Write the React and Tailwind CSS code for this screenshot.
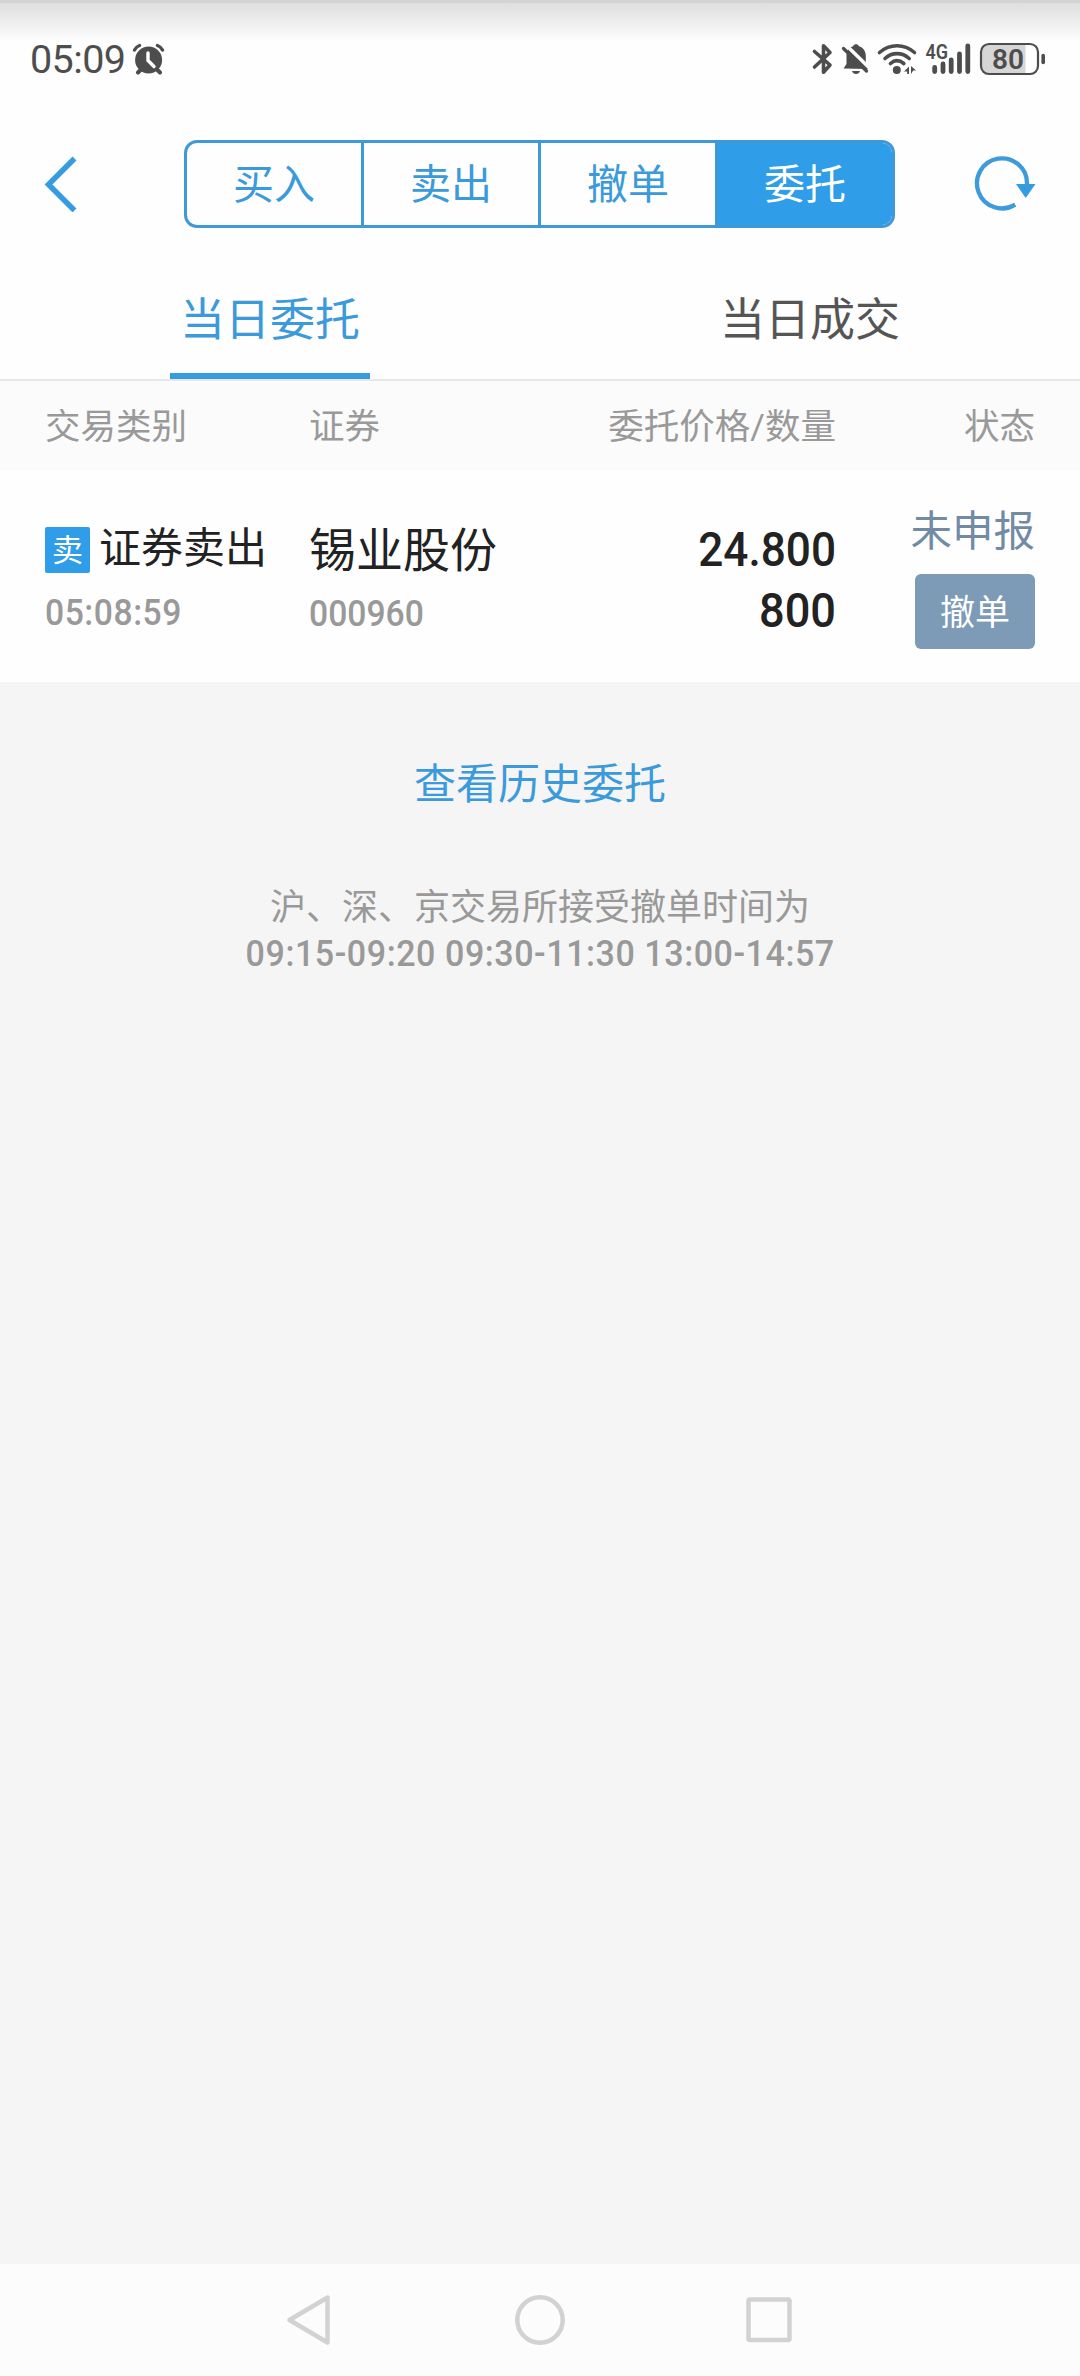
import { useState } from 'react';

const ACTIONS = ['买入', '卖出', '撤单', '委托'];
const TABS = ['当日委托', '当日成交'];

const ORDERS = [
  {
    id: 1,
    badge: '卖',
    type: '证券卖出',
    time: '05:08:59',
    name: '锡业股份',
    code: '000960',
    price: '24.800',
    amount: '800',
    status: '未申报',
  },
];

function AlarmIcon() {
  return (
    <svg width="32" height="32" viewBox="133 43 32 32" fill="none" stroke="#4d4d4d">
      <path d="M138 72.5l4-4M160 72.5l-4-4" strokeWidth="4" strokeLinecap="round" />
      <path d="M134.5 50q2-3.500 5-4.500M162.500 50q-2-3.500-5-4.500" strokeWidth="3.400" strokeLinecap="round" />
      <circle cx="148.600" cy="60" r="13.500" fill="#4d4d4d" stroke="none" />
      <path d="M148 53v7.500l6 6" stroke="#fff" strokeWidth="3.400" strokeLinecap="round" />
    </svg>
  );
}

function StatusIcons() {
  return (
    <svg width="236" height="40" viewBox="811 40 236 40" fill="none" stroke="#4d4d4d">
      {/* bluetooth */}
      <path
        d="M814.500 51.500L830 65l-6.500 7.200V45.800L830 52.500L814.500 67"
        strokeWidth="3.600"
        strokeLinecap="round"
        strokeLinejoin="round"
      />
      {/* muted bell */}
      <path
        d="M843.500 68.500l3-4.500v-9c0-5 3.500-8 6.500-8.800 1.500-2.600 4.500-2.600 6 0 4 1 6.800 5 6.800 9.800v6.500l2.500 4.500v2z"
        fill="#4d4d4d"
        stroke="none"
      />
      <path d="M852 71h8q-1 3-4 3t-4-3z" fill="#4d4d4d" stroke="none" />
      <path d="M846.500 45.500L870 68.500" stroke="#fdfdfd" strokeWidth="3.500" />
      <path d="M843.500 48.500L866.500 71" strokeWidth="3.300" strokeLinecap="round" />
      {/* wifi */}
      <path
        d="M879.500 52.500C890 43.500 904 43.500 914.500 52.500M885 58.500C892 52 902 52 909.200 58.500M890.500 63.500C894.500 60 899.500 60 903.800 63.500"
        strokeWidth="3.600"
        strokeLinecap="round"
      />
      <circle cx="896.800" cy="70" r="4" fill="#4d4d4d" stroke="none" />
      <path d="M904 71.500l5-5v7.500h-1.800v-2.500zM911 66l5 4.500h-2.800l-2.200 3.500z" fill="#4d4d4d" stroke="none" />
      {/* signal */}
      <text
        x="925.500"
        y="58.500"
        fontSize="20"
        fontWeight="600"
        fill="#4d4d4d"
        stroke="none"
        textLength="22.500"
        lengthAdjust="spacingAndGlyphs"
      >
        4G
      </text>
      <path
        d="M934.700 67.500v4M943 64v7.500M951.200 60v11.500M959.500 54v17.500M967.800 46v25.500"
        strokeWidth="4.800"
        strokeLinecap="round"
      />
      {/* battery */}
      <rect x="981" y="44" width="57" height="30" rx="8" fill="#fff" stroke="none" />
      <path d="M1025.500 44h-36.500a8 8 0 0 0-8 8v14a8 8 0 0 0 8 8h36.500z" fill="#d6d6d6" stroke="none" />
      <rect x="981" y="44" width="57" height="30" rx="8" strokeWidth="2.200" />
      <path d="M1043.200 55.500v7" strokeWidth="3.600" strokeLinecap="round" />
      <text
        x="992"
        y="69"
        fontSize="28"
        fontWeight="600"
        fill="#4d4d4d"
        stroke="none"
        textLength="32"
        lengthAdjust="spacingAndGlyphs"
      >
        80
      </text>
    </svg>
  );
}

function StatusBar() {
  return (
    <div className="flex h-[118px] items-start justify-between border-t-[3px] border-[#d3d3d3] bg-linear-to-b from-[#dedede] to-[#fefefe] to-[38px] pl-[30px] pr-[33px] text-[#4d4d4d]">
      <div className="flex pt-[40px]">
        <span className="mt-[-3px] w-[103px] text-[39.500px] leading-[40px] tracking-[-0.6px]">05:09</span>
        <AlarmIcon />
      </div>
      <div className="pt-[37px]">
        <StatusIcons />
      </div>
    </div>
  );
}

function OrderRow({ order }) {
  return (
    <div className="flex h-[211px] px-[45px] text-[#222]">
      <div className="w-[264px] pt-[53px]">
        <div className="flex h-[52px] items-center">
          <span className="flex h-[46px] w-[45px] items-center justify-center rounded-[2px] bg-[#2f9de8] pt-px text-[31px] leading-none text-white">
            {order.badge}
          </span>
          <span className="ml-[9px] whitespace-nowrap pb-[2px] text-[42px] leading-none">{order.type}</span>
        </div>
        <p className="mt-[17px] origin-left scale-x-[0.91] text-[37px] font-medium leading-[40px] tracking-[0.6px] text-[#999]">
          {order.time}
        </p>
      </div>
      <div className="w-[240px] pt-[54px]">
        <p className="whitespace-nowrap text-[47px] leading-[52px]">{order.name}</p>
        <p className="mt-[17px] origin-left scale-x-[0.91] text-[37px] font-medium leading-[40px] text-[#999]">{order.code}</p>
      </div>
      <div className="w-[287px] pt-[48px] text-right text-[48px] font-medium leading-[61px]">
        <p className="origin-right scale-x-[0.92]">{order.price}</p>
        <p className="origin-right scale-x-[0.94]">{order.amount}</p>
      </div>
      <div className="flex flex-1 flex-col items-end pt-[36px]">
        <p className="text-[41.500px] leading-[50px] text-[#728ba5]">{order.status}</p>
        <button className="mt-[17px] h-[75px] w-[120px] rounded-[6px] bg-[#7d9ab7] pt-[3px] text-[35px] leading-none text-white">
          撤单
        </button>
      </div>
    </div>
  );
}

export default function App() {
  const [action, setAction] = useState('委托');
  const [tab, setTab] = useState('当日委托');

  return (
    <div className="flex h-[2376px] w-[1080px] flex-col overflow-hidden bg-[#f5f5f5] font-[Roboto,'Noto_Sans_CJK_SC',sans-serif]">
      <div className="bg-[#fefefe]">
        <StatusBar />

        <div className="flex h-[132px] items-center pl-[44px]">
          <svg width="34" height="56" viewBox="44 156 34 56" fill="none" stroke="#369ce0" strokeWidth="5.500">
            <path d="M74.500 158.500L48.500 184.500L74.500 210.500" />
          </svg>

          <div className="ml-[106px] flex h-[88px] w-[711px] overflow-hidden rounded-[13px] border-3 border-[#3f99d6]">
            {ACTIONS.map((item) => (
              <button
                key={item}
                onClick={() => setAction(item)}
                className={
                  action === item
                    ? 'flex-1 bg-[#2f9de8] pt-[2px] text-[41px] leading-none text-white'
                    : 'flex-1 border-r-3 border-[#3f99d6] pt-[2px] text-[41px] leading-none text-[#3b9adb]'
                }
              >
                {item}
              </button>
            ))}
          </div>

          <svg className="ml-[79px]" width="62" height="60" viewBox="974 154 62 60" fill="none">
            <path d="M1015.200 204.600A25 25 0 1 1 1027 184" stroke="#3d9bdc" strokeWidth="4.300" />
            <path d="M1016 184h19.500l-9.800 14z" fill="#369ce0" />
          </svg>
        </div>

        <div className="flex h-[131px] border-b-2 border-[#e8e8e8]">
          {TABS.map((item) => (
            <button
              key={item}
              onClick={() => setTab(item)}
              className={
                tab === item
                  ? 'flex flex-1 flex-col items-center justify-between text-[#3b9adb]'
                  : 'flex flex-1 flex-col items-center justify-between text-[#555]'
              }
            >
              <span className="pt-[45px] text-[45px] leading-[52px]">{item}</span>
              {tab === item && <span className="h-[6px] w-[200px] bg-[#369ce0]" />}
            </button>
          ))}
        </div>

        <div className="flex h-[90px] items-center bg-[#fbfbfb] px-[45px] pt-[3px] text-[35.500px] leading-none text-[#999]">
          <span className="w-[264px]">交易类别</span>
          <span className="w-[240px]">证券</span>
          <span className="w-[287px] text-right">委托价格/数量</span>
          <span className="flex-1 text-right">状态</span>
        </div>

        {ORDERS.map((order) => (
          <OrderRow key={order.id} order={order} />
        ))}
      </div>

      <div className="flex flex-1 flex-col items-center pt-[78px]">
        <a className="text-[42px] leading-[50px] text-[#3b9adb]">查看历史委托</a>
        <p className="mt-[75px] text-[36px] leading-[46px] text-[#999]">沪、深、京交易所接受撤单时间为</p>
        <p className="scale-x-[0.92] whitespace-nowrap text-[37px] font-medium leading-[46px] tracking-[0.6px] text-[#999]">
          09:15-09:20 09:30-11:30 13:00-14:57
        </p>
      </div>

      <div className="flex h-[112px] items-center justify-center bg-[#fcfcfc]">
        <svg width="520" height="60" viewBox="280 2290 520 60" fill="none" stroke="#d2d2d2" strokeWidth="4.500" strokeLinejoin="round">
          <path d="M289.500 2320L327.500 2297.500V2342.500z" />
          <circle cx="540" cy="2320" r="22.700" />
          <rect x="748.500" y="2299.500" width="41" height="40.500" rx="1.500" />
        </svg>
      </div>
    </div>
  );
}
